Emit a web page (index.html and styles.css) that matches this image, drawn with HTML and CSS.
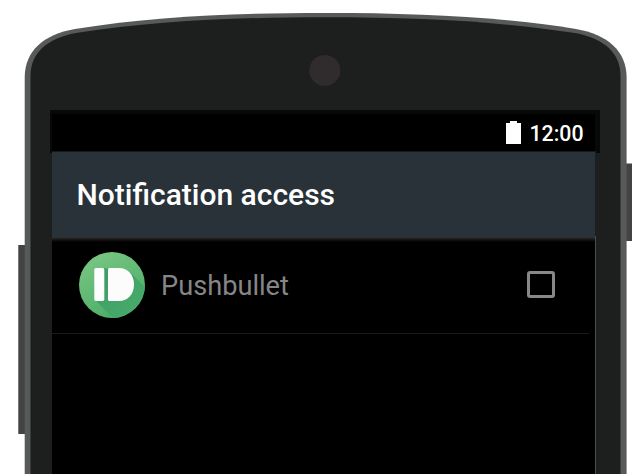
FILE: index.html
```html
<!DOCTYPE html>
<html lang="en">
<head>
<meta charset="utf-8">
<title>Notification access</title>
<link rel="stylesheet" href="styles.css">
</head>
<body>
<main class="phone">
  <svg class="phone-frame" viewBox="0 0 640 474" aria-hidden="true">
    <path fill="#434343" d="M18 245H26V434H18zM626 163.500H632V241H626z"/>
    <path fill="#777" d="M18 245H19V434H18z"/>
    <path fill="#58595a" d="M24.700 480V77C25 51 43 34.500 75 28.900C155 16.500 230 13 325 13S496 16.500 576 28.900C608 34.500 626.300 51 626.600 77V480z"/>
    <path fill="#1d1f1e" d="M30.500 480V76C30.500 53 47 38.500 76 33.100C155 21 230 17.300 325 17.300S496 21 575 33.100C604 38.500 620.500 53 620.500 76V480z"/>
    <circle cx="324.800" cy="70.500" r="15.500" fill="#302b2c"/>
  </svg>
  <section class="screen">
    <div class="status-bar">
      <svg class="battery" viewBox="0 0 15 23" aria-hidden="true"><path fill="#fff" d="M4 0h7v2h4v21H0V2h4z"/></svg>
      <span class="clock">12:00</span>
    </div>
    <div class="content">
      <header class="app-bar"><h1 class="title">Notification access</h1></header>
      <div class="row">
        <svg class="app-icon" viewBox="0 0 66 66" aria-hidden="true">
          <defs>
            <linearGradient id="green" x1="0" y1="0" x2=".5" y2="1"><stop offset="0" stop-color="#7fc886"/><stop offset="1" stop-color="#4caf68"/></linearGradient>
            <linearGradient id="shade" x1="0" y1="0" x2="1" y2="1"><stop offset="0" stop-color="#3d9a65"/><stop offset="1" stop-color="#49ae6c"/></linearGradient>
            <clipPath id="disc"><circle cx="33" cy="33" r="33"/></clipPath>
          </defs>
          <circle cx="33" cy="33" r="33" fill="url(#green)"/>
          <path clip-path="url(#disc)" fill="url(#shade)" d="M16 48L34 66H66V35L52 21L25 16V48z"/>
          <rect x="15.300" y="16" width="10" height="33" rx="1.800" fill="#fff"/>
          <path fill="#fcfcfc" d="M30.500 16H40C49 16 55 23 55 32.500S49 49 40 49H30.500Q29 49 29 47.500V17.500Q29 16 30.500 16z"/>
        </svg>
        <span class="app-name">Pushbullet</span>
        <span class="checkbox" role="checkbox" aria-checked="false" aria-label="Pushbullet"></span>
      </div>
      <div class="divider"></div>
    </div>
  </section>
</main>
</body>
</html>
```

FILE: styles.css
```css
* { box-sizing: border-box; }
body { margin: 0; background: #fff; font-family: Roboto, sans-serif; }
.phone { position: relative; height: 474px; padding: 110px 40px 0 50px; overflow: hidden; }
.phone-frame { position: absolute; inset: 0; width: 640px; height: 474px; }
.screen { position: relative; }
.status-bar {
  display: flex;
  align-items: flex-start;
  justify-content: flex-end;
  gap: 8.5px;
  width: 550px;
  height: 43px;
  padding: 7px 11.5px 0 0;
  background: #000;
  border: solid #070908;
  border-width: 4px 5px 0 2px;
}
.battery { width: 15px; height: 23px; }
.clock { color: #fff; font-size: 21.3px; font-weight: 500; line-height: 26px; }
.content {
  position: relative;
  width: 544px;
  height: 323px;
  margin: -2px 0 0 2px;
  background: linear-gradient(#182023 85px, #4c4c4c 85px) right top / 1px 100% no-repeat #000;
}
.app-bar {
  display: flex;
  align-items: center;
  width: 543px;
  height: 86px;
  padding-left: 24.5px;
  background: #283238;
  border-top: 1px solid #141a1d;
}
.title { margin: 0; color: #fff; font-size: 30px; font-weight: 500; line-height: 36px; }
.row {
  display: flex;
  align-items: center;
  width: 543px;
  height: 96px;
  padding: 0 40px 0 27px;
  background: linear-gradient(#353433, #1c1c1c 2px, #000 5px);
}
.app-icon { width: 66px; height: 66px; }
.app-name { margin: 2px 0 0 16px; color: #868686; font-size: 27.2px; line-height: 34px; }
.checkbox { width: 28px; height: 27px; margin: -2px 0 0 auto; border: 3px solid #888; border-radius: 3px; }
.divider { width: 537px; height: 1px; background: #1b1b1b; }
```
